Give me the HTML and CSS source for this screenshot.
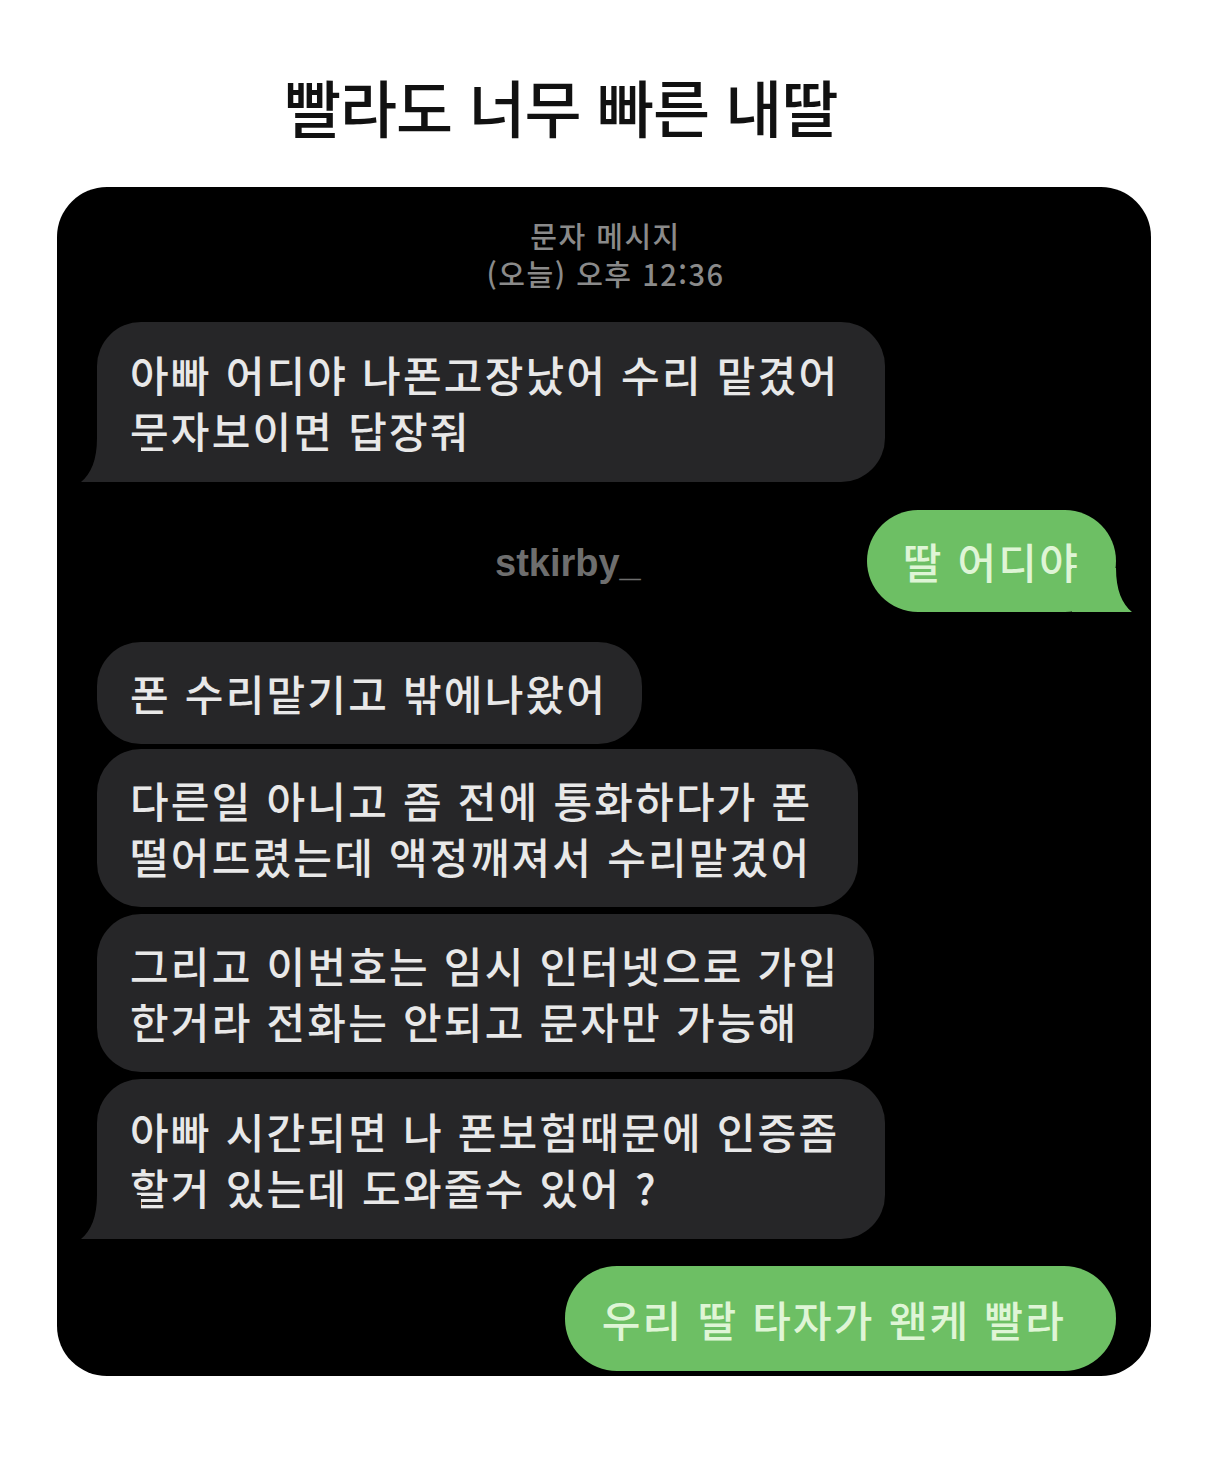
FILE: index.html
```html
<!DOCTYPE html>
<html lang="ko">
<head>
    <meta charset="UTF-8">
    <meta name="viewport" content="width=device-width, initial-scale=1.0">
    <title>빨라도 너무 빠른 내딸</title>
    <link rel="stylesheet" href="styles.css">
</head>
<body>

    <h1 class="title">빨라도 너무 빠른 내딸</h1>

    <div class="chat">
        <div class="chat-head">
            <div>문자 메시지</div>
            <div>(오늘) 오후 12:36</div>
        </div>

        <div class="bubble in first tall">
            아빠 어디야 나폰고장났어 수리 맡겼어<br>문자보이면 답장줘
            <svg class="tail" viewBox="0 0 60 44"><path d="M16 0 C16 22 10 36 0 44 L60 44 L60 0 Z"/></svg>
        </div>

        <div class="out-row">
            <span class="mark">stkirby_</span>
            <div class="bubble out">
                딸 어디야
                <svg class="tail" viewBox="0 0 60 44"><path d="M44 0 C44 22 50 36 60 44 L0 44 L0 0 Z"/></svg>
            </div>
        </div>

        <div class="bubble in group-top narrow">폰 수리맡기고 밖에나왔어</div>
        <div class="bubble in second">다른일 아니고 좀 전에 통화하다가 폰<br>떨어뜨렸는데 액정깨져서 수리맡겼어</div>
        <div class="bubble in narrow">그리고 이번호는 임시 인터넷으로 가입<br>한거라 전화는 안되고 문자만 가능해</div>
        <div class="bubble in tall">
            아빠 시간되면 나 폰보험때문에 인증좀<br>할거 있는데 도와줄수 있어 ?
            <svg class="tail" viewBox="0 0 60 44"><path d="M16 0 C16 22 10 36 0 44 L60 44 L60 0 Z"/></svg>
        </div>

        <div class="bubble out last">우리 딸 타자가 왠케 빨라</div>
    </div>

</body>
</html>
```

FILE: styles.css
```css
body {
    background-color: #fff;
    margin: 0;
    font-family: "Noto Sans CJK KR", "Noto Sans", sans-serif;
}

.title {
    margin: 70px 0 0 284px;
    font-size: 62px;
    line-height: 72px;
    font-weight: 500;
    letter-spacing: -1px;
    color: #111;
}

.chat {
    margin: 45px 0 0 57px;
    width: 1094px;
    box-sizing: border-box;
    padding: 29px 35px 5px 40px;
    background-color: #000;
    border-radius: 50px;
    overflow: hidden;
    display: flex;
    flex-direction: column;
}

.chat-head {
    text-align: center;
    color: #8a8a8a;
    font-size: 29px;
    line-height: 38px;
    font-weight: 500;
    letter-spacing: 1.5px;
    margin-left: -2px;
}

.bubble {
    position: relative;
    align-self: flex-start;
    padding: 23px 46px 23px 33px;
    border-radius: 44px;
    font-size: 42px;
    line-height: 56px;
    font-weight: 500;
    letter-spacing: 2.2px;
    white-space: nowrap;
}

.bubble.in {
    background-color: #262628;
    color: #e8e8e8;
    margin-top: 7px;
}

.bubble.in.tall {
    padding-top: 24px;
    padding-bottom: 24px;
}

.bubble.in.narrow {
    padding-right: 35px;
}

.bubble.in.first,
.bubble.in.group-top {
    margin-top: 30px;
}

.bubble.in.second {
    margin-top: 5px;
}

.bubble.out {
    align-self: flex-end;
    background-color: #6dbf64;
    color: #dff5d6;
    padding: 23px 36px;
    border-radius: 52px;
}

.bubble.out.last {
    margin-top: 27px;
    padding: 25px 50px 24px 37px;
}

.tail {
    position: absolute;
    bottom: 0;
    width: 60px;
    height: 44px;
}

.bubble.in .tail {
    left: -16px;
    fill: #262628;
}

.bubble.out .tail {
    right: -16px;
    fill: #6dbf64;
}

.out-row {
    position: relative;
    display: flex;
    justify-content: flex-end;
    margin-top: 28px;
}

.mark {
    position: absolute;
    left: 398px;
    top: 32px;
    font-family: "Liberation Sans", Arial, sans-serif;
    font-weight: bold;
    font-size: 38px;
    color: #6e6e6e;
}
```
